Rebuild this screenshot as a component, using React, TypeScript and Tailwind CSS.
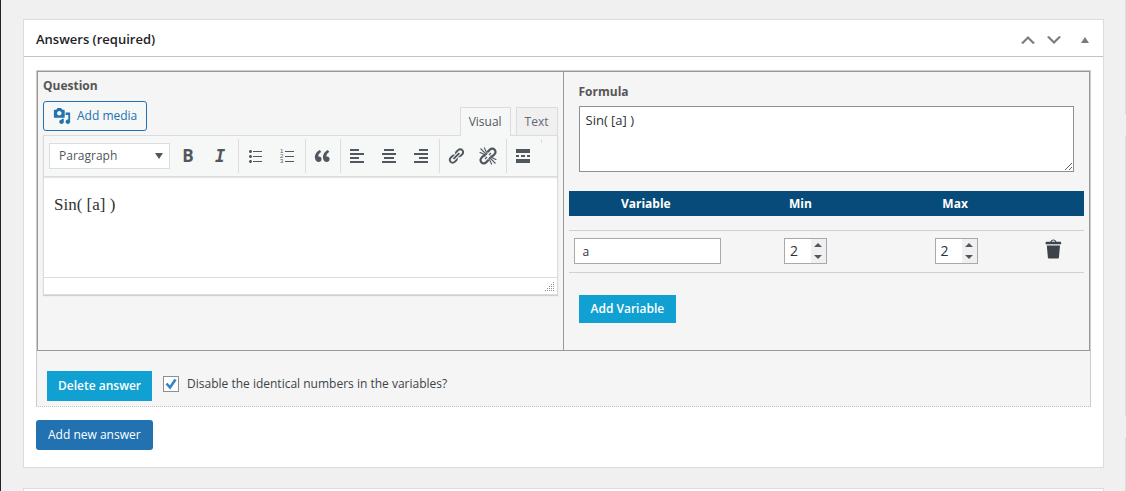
import { useState } from "react";
import type { ReactNode } from "react";

const ICONS = {
    media: "M13 11V4c0-.55-.45-1-1-1h-1.67L9 1H5L3.67 3H2c-.55 0-1 .45-1 1v7c0 .55.45 1 1 1h10c.55 0 1-.45 1-1zM7 4.5c1.38 0 2.5 1.12 2.5 2.5S8.38 9.5 7 9.5 4.5 8.38 4.5 7 5.62 4.5 7 4.5zM14 6h5v10.5c0 1.38-1.12 2.5-2.5 2.5S14 17.88 14 16.5s1.12-2.5 2.5-2.5c.17 0 .34.02.5.05V9h-3V6zm-4 8.05V13h2v3.5c0 1.38-1.12 2.5-2.5 2.5S7 17.88 7 16.5 8.12 14 9.5 14c.17 0 .34.02.5.05z",
    bullets: "M5.5 7C4.67 7 4 6.33 4 5.5 4 4.68 4.67 4 5.5 4 6.32 4 7 4.68 7 5.5 7 6.33 6.32 7 5.5 7zM8 5h9v1H8V5zm-2.5 7c-.83 0-1.5-.67-1.5-1.5C4 9.68 4.67 9 5.5 9c.82 0 1.5.68 1.5 1.5 0 .83-.68 1.5-1.5 1.5zM8 10h9v1H8v-1zm-2.5 7c-.83 0-1.5-.67-1.5-1.5 0-.82.67-1.5 1.5-1.5.82 0 1.5.68 1.5 1.5 0 .83-.68 1.5-1.5 1.5zM8 15h9v1H8v-1z",
    quote: "M9.49 13.22c0-.74-.2-1.38-.61-1.9-.62-.78-1.83-.88-2.53-.72-.29-1.65 1.11-3.75 2.92-4.65L7.88 4c-2.73 1.3-5.42 4.28-4.96 8.05C3.21 14.43 4.59 16 6.54 16c.85 0 1.56-.25 2.12-.75s.83-1.18.83-2.03zm8.05 0c0-.74-.2-1.38-.61-1.9-.63-.78-1.83-.88-2.53-.72-.29-1.65 1.11-3.75 2.92-4.65L15.93 4c-2.73 1.3-5.41 4.28-4.95 8.05.29 2.38 1.66 3.95 3.61 3.95.85 0 1.56-.25 2.12-.75s.83-1.18.83-2.03z",
    alignLeft: "M3 3h9v2H3zM3 7h14v2H3zM3 11h9v2H3zM3 15h14v2H3z",
    alignCenter: "M5 3h10v2H5zM3 7h14v2H3zM5 11h10v2H5zM3 15h14v2H3z",
    alignRight: "M8 3h9v2H8zM3 7h14v2H3zM8 11h9v2H8zM3 15h14v2H3z",
    link: "M17.74 2.76c1.68 1.69 1.68 4.41 0 6.1l-1.53 1.52c-1.12 1.12-2.7 1.47-4.14 1.09l2.62-2.61.76-.77.76-.76c.84-.84.84-2.2 0-3.04-.84-.85-2.2-.85-3.04 0l-.77.76-3.38 3.38c-.37-1.44-.02-3.02 1.1-4.14l1.52-1.53c1.69-1.68 4.42-1.68 6.1 0zM8.59 13.43l5.34-5.34c.42-.42.42-1.1 0-1.52-.44-.43-1.13-.39-1.53 0l-5.33 5.34c-.42.42-.42 1.1 0 1.52.44.43 1.13.39 1.52 0zm-.76 2.29l4.14-4.15c.38 1.44.03 3.02-1.09 4.14l-1.52 1.53c-1.69 1.68-4.41 1.68-6.1 0-1.68-1.68-1.68-4.42 0-6.1l1.53-1.52c1.12-1.12 2.7-1.47 4.14-1.1l-4.14 4.15c-.85.84-.85 2.2 0 3.05.84.84 2.2.84 3.04 0z",
    more: "M17 7V3H3v4h14zM6 11V9H3v2h3zm6 0V9H8v2h4zm5 0V9h-3v2h3zm0 6v-4H3v4h14z",
    trash: "M12 4h3c.6 0 1 .4 1 1v1H3V5c0-.6.5-1 1-1h3c.2-1.1 1.3-2 2.5-2s2.3.9 2.5 2zM8 4h3c-.2-.6-.9-1-1.5-1S8.2 3.4 8 4zM4 7h11l-.9 10.1c0 .5-.5.9-1 .9H5.9c-.5 0-.9-.4-1-.9L4 7z",
    up: "M15 14l-5-5-5 5-2-1 7-7 7 7z",
    down: "M5 6l5 5 5-5 2 1-7 7-7-7z",
};

function Icon({ name, className = "size-5" }: { name: keyof typeof ICONS; className?: string }) {
    return (
        <svg viewBox="0 0 20 20" className={className} fill="currentColor" aria-hidden="true">
            <path d={ICONS[name]} />
        </svg>
    );
}

function NumberedIcon() {
    return (
        <svg viewBox="0 0 20 20" className="size-5" fill="currentColor" aria-hidden="true">
            <path d="M8 5h9v1H8zM8 10h9v1H8zM8 15h9v1H8z" />
            <g className="font-['Liberation_Sans'] text-[6px]">
                <text x="3" y="7">1</text>
                <text x="3" y="12">2</text>
                <text x="3" y="17">3</text>
            </g>
        </svg>
    );
}

function UnlinkIcon() {
    return (
        <svg viewBox="0 0 20 20" className="size-5" fill="none" stroke="currentColor" aria-hidden="true">
            <path strokeWidth="2.2" d="M9.3 6.2l2.6-2.6a3.2 3.2 0 0 1 4.6 0 3.2 3.2 0 0 1 0 4.6l-1.8 1.8-2 .6M10.7 13.8l-2.6 2.6a3.2 3.2 0 0 1-4.6 0 3.2 3.2 0 0 1 0-4.6l1.8-1.8 2-.6" />
            <path strokeWidth="1.1" d="M8.8 8.8L2.5 2.5M8 9.3L1.6 6.2M9.3 8L6.2 1.6M11.2 11.2l6.3 6.3M12 10.7l6.4 3.1M10.7 12l3.1 6.4M11 9l2-2M9 11l-2 2" />
        </svg>
    );
}

function ToolButton({ label, children }: { label: string; children: ReactNode }) {
    return (
        <button type="button" aria-label={label} className="flex h-[34px] w-8 items-center justify-center text-[#50575e]">
            {children}
        </button>
    );
}

function ToolGroup({ children }: { children: ReactNode }) {
    return <div className="flex border-l border-[#dcdcde] pr-[2px]">{children}</div>;
}

function Editor() {
    return (
        <div>
            <div className="flex items-end justify-between">
                <button type="button" className="mb-1 flex h-[30px] items-center gap-[6px] rounded-[3px] border border-[#2271b1] bg-[#f6f7f7] px-[9px] text-[#2271b1]">
                    <Icon name="media" className="size-[18px]" />
                    Add media
                </button>
                <div className="z-10 -mb-px flex gap-[5px] text-[#646970]">
                    <button type="button" className="h-[29px] border border-b-0 border-[#dcdcde] bg-[#f6f7f7] px-2 text-[#50575e]">
                        Visual
                    </button>
                    <button type="button" className="h-[29px] border border-[#dcdcde] bg-[#f0f0f1] px-2">
                        Text
                    </button>
                </div>
            </div>
            <div className="border border-[#dcdcde] bg-white shadow-[0_1px_1px_rgba(0,0,0,0.15)]">
                <div className="flex items-center border-b border-[#dcdcde] bg-[#f6f7f7] px-[5px] py-[3px] shadow-[0_1px_1px_rgba(0,0,0,0.1)]">
                    <div className="relative mr-[2px]">
                        <select aria-label="Block format" className="h-[26px] w-[121px] appearance-none border border-[#dcdcde] bg-white pl-[9px] text-[#50575e]">
                            <option>Paragraph</option>
                            <option>Heading 1</option>
                            <option>Heading 2</option>
                        </select>
                        <svg viewBox="0 0 8 6" className="pointer-events-none absolute top-[10px] right-[7px] h-[6px] w-2" fill="#50575e" aria-hidden="true">
                            <path d="M0 0h8L4 6z" />
                        </svg>
                    </div>
                    <ToolButton label="Bold">
                        <span className="text-[17px] font-bold">B</span>
                    </ToolButton>
                    <ToolButton label="Italic">
                        <span className="font-['DejaVu_Sans_Mono'] text-[17px] font-bold italic">I</span>
                    </ToolButton>
                    <div className="w-[2px]" />
                    <ToolGroup>
                        <ToolButton label="Bulleted list"><Icon name="bullets" /></ToolButton>
                        <ToolButton label="Numbered list"><NumberedIcon /></ToolButton>
                    </ToolGroup>
                    <ToolGroup>
                        <ToolButton label="Blockquote"><Icon name="quote" /></ToolButton>
                    </ToolGroup>
                    <ToolGroup>
                        <ToolButton label="Align left"><Icon name="alignLeft" /></ToolButton>
                        <ToolButton label="Align center"><Icon name="alignCenter" /></ToolButton>
                        <ToolButton label="Align right"><Icon name="alignRight" /></ToolButton>
                    </ToolGroup>
                    <ToolGroup>
                        <ToolButton label="Insert link"><Icon name="link" className="size-[18px]" /></ToolButton>
                        <ToolButton label="Remove link"><UnlinkIcon /></ToolButton>
                    </ToolGroup>
                    <ToolGroup>
                        <ToolButton label="Read more"><Icon name="more" /></ToolButton>
                    </ToolGroup>
                    <div className="h-1 self-start border-l border-[#dcdcde]" />
                </div>
                <textarea
                    aria-label="Question"
                    defaultValue="Sin( [a] )"
                    className="block h-[100px] w-full resize-none px-[10px] py-4 font-['Liberation_Serif',serif] text-[17px] leading-6 text-[#333]"
                />
                <div className="flex h-[17px] items-end justify-end border-t border-[#dcdcde] p-[2px]">
                    <svg viewBox="0 0 10 10" className="size-[10px]" fill="#8c8f94" aria-hidden="true">
                        <path d="M8 0h1v1H8zM6 2h1v1H6zM8 2h1v1H8zM4 4h1v1H4zM6 4h1v1H6zM8 4h1v1H8zM2 6h1v1H2zM4 6h1v1H4zM6 6h1v1H6zM8 6h1v1H8zM0 8h1v1H0zM2 8h1v1H2zM4 8h1v1H4zM6 8h1v1H6zM8 8h1v1H8z" />
                    </svg>
                </div>
            </div>
        </div>
    );
}

function NumberField({ label }: { label: string }) {
    const [value, setValue] = useState(2);

    return (
        <div className="inline-flex h-[26px] w-[43px] border border-[#a7aaad] bg-white align-middle">
            <input
                type="number"
                aria-label={label}
                value={value}
                onChange={(e) => setValue(Number(e.target.value))}
                className="w-[26px] appearance-none pl-[5px] text-sm text-[#2c3338] [-moz-appearance:textfield] [&::-webkit-inner-spin-button]:appearance-none"
            />
            <div className="flex flex-1 flex-col bg-[#f0f0f0] text-[#50575e]">
                <button type="button" aria-label={`Increase ${label}`} onClick={() => setValue(value + 1)} className="flex flex-1 items-center justify-center">
                    <svg viewBox="0 0 8 4" className="h-1 w-2" fill="currentColor"><path d="M0 4h8L4 0z" /></svg>
                </button>
                <button type="button" aria-label={`Decrease ${label}`} onClick={() => setValue(value - 1)} className="flex flex-1 items-center justify-center">
                    <svg viewBox="0 0 8 4" className="h-1 w-2" fill="currentColor"><path d="M0 0h8L4 4z" /></svg>
                </button>
            </div>
        </div>
    );
}

function Variables() {
    return (
        <table className="w-full table-fixed border-collapse">
            <thead>
                <tr className="h-[25px] bg-[#064b79] text-white">
                    <th className="w-[30%] font-bold">Variable</th>
                    <th className="w-[30%] font-bold">Min</th>
                    <th className="w-[30%] font-bold">Max</th>
                    <th className="w-[10%]" />
                </tr>
            </thead>
            <tbody>
                <tr className="h-[14px]">
                    <td colSpan={4} />
                </tr>
                <tr className="h-[42px] border-y border-[#d0d0d0] text-center">
                    <td className="pr-[2px] pl-[5px] text-left">
                        <input
                            type="text"
                            aria-label="Variable"
                            defaultValue="a"
                            className="block h-[26px] w-full border border-[#a7aaad] bg-white px-2 text-[#2c3338]"
                        />
                    </td>
                    <td className="pl-[10px]"><NumberField label="Min" /></td>
                    <td className="pl-[2px]"><NumberField label="Max" /></td>
                    <td>
                        <button type="button" aria-label="Remove variable" className="block pb-1 pl-[10px] text-[#3c434a]">
                            <Icon name="trash" className="size-6" />
                        </button>
                    </td>
                </tr>
            </tbody>
        </table>
    );
}

export default function App() {
    return (
        <div className="flex min-h-screen border-l border-[#1d2327] bg-[#f0f0f0] font-['Open_Sans','Noto_Sans',sans-serif] text-xs text-[#3c434a]">
            <main className="flex min-w-0 flex-1 flex-col gap-5 pt-[19px] pr-[21px] pl-[22px]">
                <section className="border border-[#dcdcde] bg-white">
                    <header className="flex h-[37px] items-center justify-between border-b border-[#c3c4c7] pt-[3px] pl-3 text-[#787c82]">
                        <h2 className="text-[13px] font-semibold text-[#1d2327]">Answers (required)</h2>
                        <div className="flex items-center">
                            <button type="button" aria-label="Move up" className="flex w-[26px] justify-center"><Icon name="up" /></button>
                            <button type="button" aria-label="Move down" className="flex w-[26px] justify-center"><Icon name="down" /></button>
                            <button type="button" aria-label="Toggle panel" className="flex w-9 justify-center">
                                <svg viewBox="0 0 8 6" className="h-[6px] w-2" fill="currentColor"><path d="M0 6h8L4 0z" /></svg>
                            </button>
                        </div>
                    </header>
                    <div className="px-3 pt-[13px] pb-[17px]">
                        <div className="border border-b-[#c3c4c7] border-x-[#ccc] border-t-[#ccc] bg-[#f5f5f5] [border-bottom-style:dotted]">
                            <div className="flex min-h-[280px] border border-[#999]">
                                <div className="w-1/2 border-r border-[#999] px-[5px] pt-1">
                                    <h3 className="mb-[5px] leading-5 font-bold text-[#555]">Question</h3>
                                    <Editor />
                                </div>
                                <div className="w-1/2 px-[5px] pt-[10px]">
                                    <div className="px-[10px]">
                                        <label htmlFor="formula" className="mb-1 block leading-5 font-bold text-[#555]">Formula</label>
                                        <textarea
                                            id="formula"
                                            defaultValue="Sin( [a] )"
                                            className="block h-[66px] w-full border border-[#8c8f94] bg-white px-[6px] py-[3px] text-[13px] leading-5 text-[#2c3338]"
                                        />
                                    </div>
                                    <div className="mt-[19px]">
                                        <Variables />
                                    </div>
                                    <button type="button" className="mt-[22px] ml-[10px] h-7 bg-[#11a0d2] px-3 font-semibold text-white">
                                        Add Variable
                                    </button>
                                </div>
                            </div>
                            <div className="flex items-center gap-[11px] px-[10px] pt-5 pb-[5px]">
                                <button type="button" className="h-[30px] bg-[#11a0d2] px-[11px] font-semibold text-white">
                                    Delete answer
                                </button>
                                <label className="mb-1 flex items-center gap-2">
                                    <span className="relative flex">
                                        <input type="checkbox" defaultChecked className="peer size-4 appearance-none border border-[#8c8f94] bg-white" />
                                        <svg viewBox="0 0 16 16" className="pointer-events-none absolute inset-0 hidden size-4 peer-checked:block" fill="none" stroke="#3582c4" strokeWidth="2.6" aria-hidden="true">
                                            <path d="M3.5 7.5L7 11.5l5.5-8" />
                                        </svg>
                                    </span>
                                    Disable the identical numbers in the variables?
                                </label>
                            </div>
                        </div>
                        <button type="button" className="mt-[13px] h-[30px] rounded-[3px] bg-[#2271b1] px-3 text-white">
                            Add new answer
                        </button>
                    </div>
                </section>
                <section className="flex-1 border border-b-0 border-[#dcdcde] bg-white" />
            </main>
            <aside className="flex w-px flex-col gap-[22px]">
                <div className="h-[114px] bg-[#dcdcde]" />
                <div className="h-[280px] bg-[#dcdcde]" />
                <div className="flex-1 bg-[#dcdcde]" />
            </aside>
        </div>
    );
}
